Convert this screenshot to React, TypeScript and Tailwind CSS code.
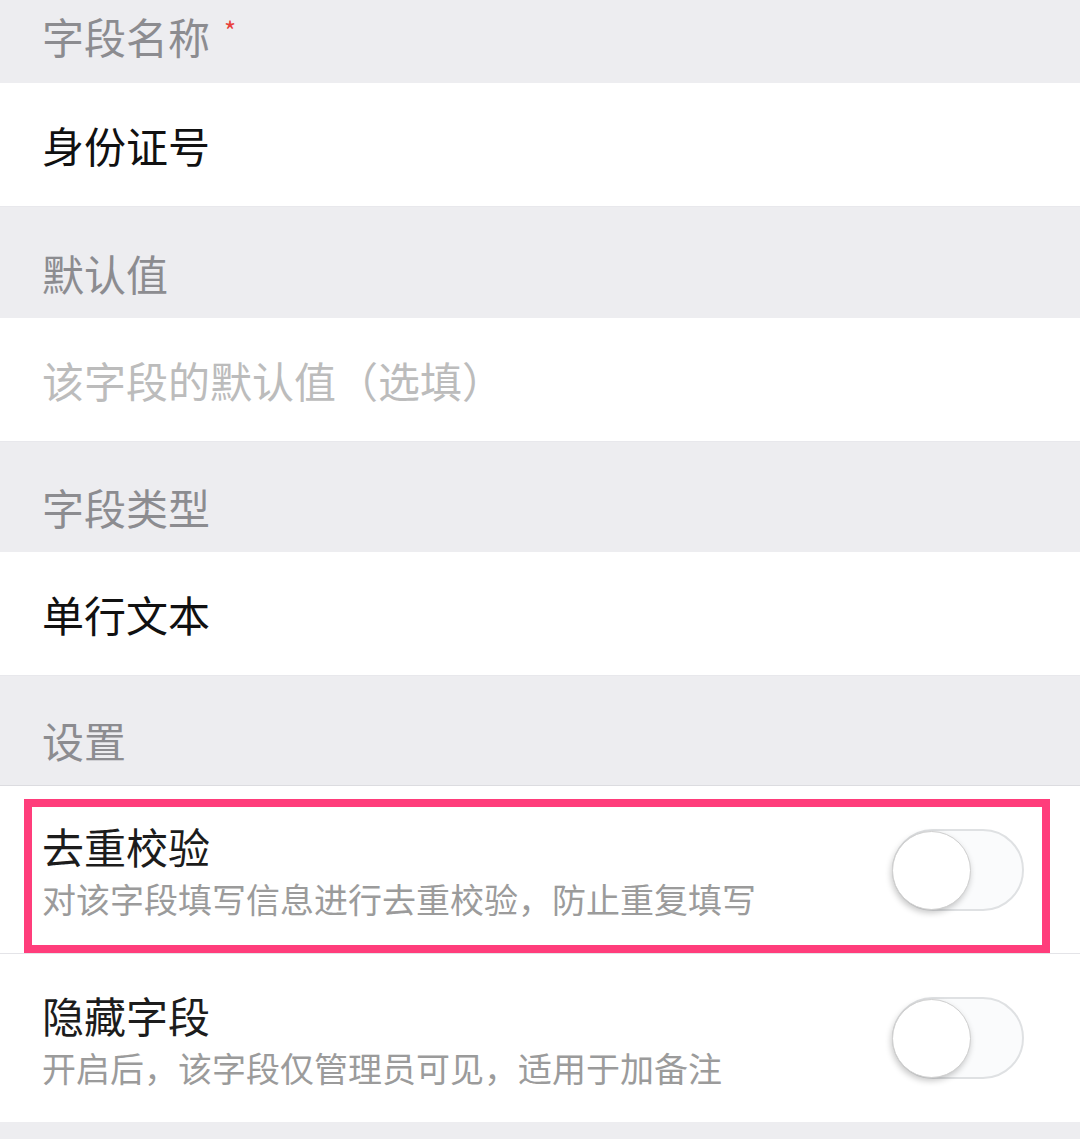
import React from "react";

const font = { fontFamily: '"Noto Sans CJK SC", "Noto Sans", sans-serif' };

function Header({ children, h }: { children: React.ReactNode; h: string }) {
  return (
    <div className={`flex items-end bg-[#ededf0] pl-[42px] pb-[24px] ${h}`}>
      <div className="text-[42px] leading-none text-[#8c8c90]">{children}</div>
    </div>
  );
}

function Field({ text, placeholder }: { text: string; placeholder?: boolean }) {
  return (
    <div className="flex h-[124px] items-center border-b border-[#e8e8ec] bg-white pl-[42px]">
      <div className={`text-[42px] leading-none [font-feature-settings:'fwid'] ${placeholder ? "text-[#bcbcbc]" : "text-[#111111]"}`}>{text}</div>
    </div>
  );
}

function Toggle() {
  return (
    <div className="relative h-[82px] w-[132px] rounded-full border-2 border-[#dfe1e3] bg-[#fafbfc]">
      <div className="absolute left-[-2px] top-[0px] h-[79px] w-[79px] rounded-full border border-[#cfcfcf] bg-white shadow-[-1px_3px_6px_rgba(0,0,0,0.22)]" />
    </div>
  );
}

function ToggleRow({ title, desc, border }: { title: string; desc: string; border?: boolean }) {
  return (
    <div className={`flex h-[168px] items-center justify-between bg-white pl-[42px] pr-[56px] ${border ? "border-b border-[#e4e4e8]" : ""}`}>
      <div className="flex flex-col pt-[2px]">
        <div className="text-[42px] leading-none text-[#1c1c1c]">{title}</div>
        <div className="mt-[15px] text-[34px] leading-none text-[#9b9b9b]">{desc}</div>
      </div>
      <Toggle />
    </div>
  );
}

export default function App() {
  return (
    <div className="w-[1080px] h-[1139px] overflow-hidden bg-[#ededf0]" style={font}>
      <div className="flex h-[83px] items-end bg-[#ededf0] pl-[42px] pb-[26px]">
        <div className="text-[42px] leading-none text-[#8c8c90]">字段名称</div>
        <div className="ml-[14px] mb-[14px] text-[26px] leading-none text-[#e8403a]">*</div>
      </div>
      <Field text="身份证号" />
      <Header h="h-[111px]">默认值</Header>
      <Field text="该字段的默认值（选填）" placeholder />
      <Header h="h-[110px]">字段类型</Header>
      <Field text="单行文本" />
      <div className="flex h-[110px] items-end border-b border-[#dcdce0] bg-[#ededf0] pl-[42px] pb-[24px]">
        <div className="text-[42px] leading-none text-[#8c8c90]">设置</div>
      </div>
      <div className="relative">
        <ToggleRow title="去重校验" desc="对该字段填写信息进行去重校验，防止重复填写" border />
        <div className="pointer-events-none absolute left-[24px] top-[13px] h-[154px] w-[1026px] border-[8px] border-[#ff3d7b]" />
      </div>
      <ToggleRow title="隐藏字段" desc="开启后，该字段仅管理员可见，适用于加备注" />
    </div>
  );
}
